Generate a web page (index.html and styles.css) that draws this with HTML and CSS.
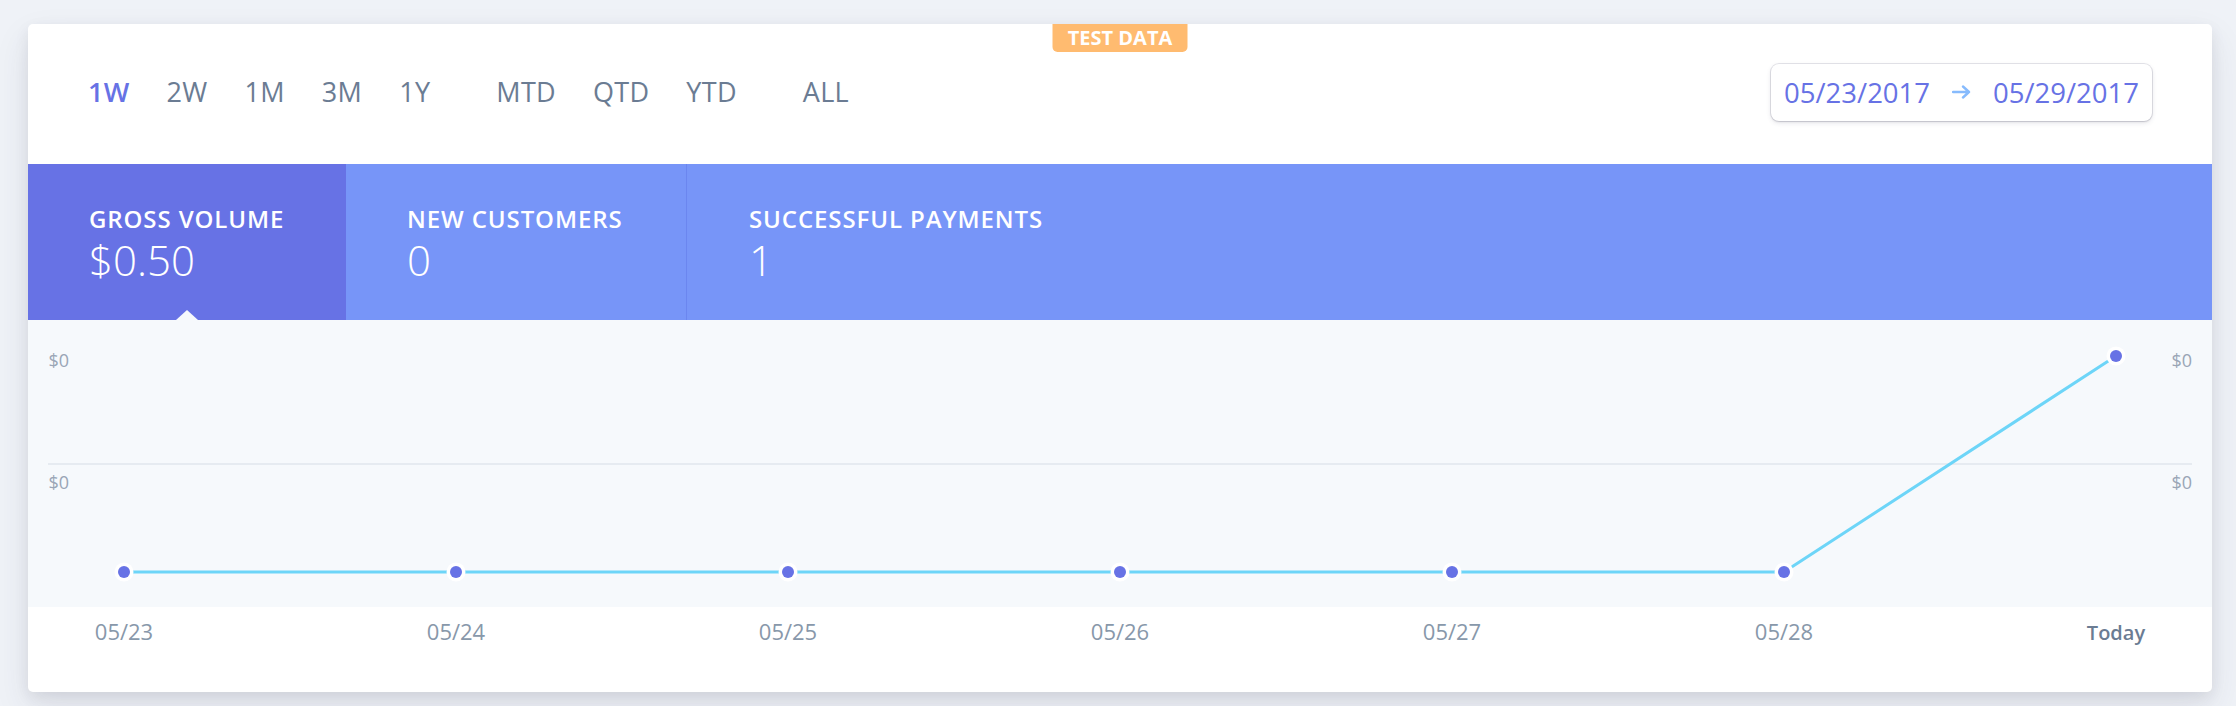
FILE: index.html
```html
<!DOCTYPE html>
<html lang="en">
<head>
<meta charset="utf-8">
<title>Dashboard</title>
<link rel="stylesheet" href="styles.css">
</head>
<body>
<div class="page">
  <div class="card">
    <div class="badge">TEST DATA</div>
    <div class="header">
      <nav class="periods">
        <div class="group">
          <span class="period active">1W</span>
          <span class="period">2W</span>
          <span class="period">1M</span>
          <span class="period">3M</span>
          <span class="period">1Y</span>
        </div>
        <div class="group">
          <span class="period">MTD</span>
          <span class="period">QTD</span>
          <span class="period">YTD</span>
        </div>
        <div class="group">
          <span class="period">ALL</span>
        </div>
      </nav>
      <div class="range">
        <span class="date">05/23/2017</span>
        <svg class="arrow" width="19" height="14" viewBox="0 0 19 14"><path d="M1 7H17M11 1.5L17 7L11 12.5" fill="none" stroke="#87bbfd" stroke-width="2.4" stroke-linecap="round" stroke-linejoin="round"/></svg>
        <span class="date">05/29/2017</span>
      </div>
    </div>
    <div class="stats">
      <div class="stat stat-active">
        <div class="stat-label">GROSS VOLUME</div>
        <div class="stat-value">$0.50</div>
        <span class="caret"></span>
      </div>
      <div class="stat stat-second">
        <div class="stat-label">NEW CUSTOMERS</div>
        <div class="stat-value">0</div>
      </div>
      <div class="stat stat-third">
        <div class="stat-label">SUCCESSFUL PAYMENTS</div>
        <div class="stat-value">1</div>
      </div>
    </div>
    <svg class="chart" width="2184" height="372" viewBox="0 0 2184 372">
      <rect x="0" y="0" width="2184" height="287" fill="#f6f9fc"/>
      <line x1="20" y1="144" x2="2164" y2="144" stroke="#e6ebf1" stroke-width="2"/>
      <g class="ylabel">
        <text x="20.5" y="47">$0</text>
        <text x="20.5" y="169">$0</text>
        <text x="2164" y="47" text-anchor="end">$0</text>
        <text x="2164" y="169" text-anchor="end">$0</text>
      </g>
      <polyline points="96,252 428,252 760,252 1092,252 1424,252 1756,252 2088,36" fill="none" stroke="#6dd5f8" stroke-width="3" stroke-linejoin="round"/>
      <g class="dots">
        <circle cx="96" cy="252" r="9.5" fill="#ffffff"/><circle cx="96" cy="252" r="6" fill="#6772e5"/>
        <circle cx="428" cy="252" r="9.5" fill="#ffffff"/><circle cx="428" cy="252" r="6" fill="#6772e5"/>
        <circle cx="760" cy="252" r="9.5" fill="#ffffff"/><circle cx="760" cy="252" r="6" fill="#6772e5"/>
        <circle cx="1092" cy="252" r="9.5" fill="#ffffff"/><circle cx="1092" cy="252" r="6" fill="#6772e5"/>
        <circle cx="1424" cy="252" r="9.5" fill="#ffffff"/><circle cx="1424" cy="252" r="6" fill="#6772e5"/>
        <circle cx="1756" cy="252" r="9.5" fill="#ffffff"/><circle cx="1756" cy="252" r="6" fill="#6772e5"/>
        <circle cx="2088" cy="36" r="9.5" fill="#ffffff"/><circle cx="2088" cy="36" r="6" fill="#6772e5"/>
      </g>
      <g class="xlabel">
        <text x="96" y="320">05/23</text>
        <text x="428" y="320">05/24</text>
        <text x="760" y="320">05/25</text>
        <text x="1092" y="320">05/26</text>
        <text x="1424" y="320">05/27</text>
        <text x="1756" y="320">05/28</text>
        <text class="today" x="2088" y="320">Today</text>
      </g>
    </svg>
  </div>
</div>
</body>
</html>
```
FILE: styles.css
```css
* { box-sizing: border-box; }
html, body {
  margin: 0;
  padding: 0;
  background: #eff2f7;
  font-family: "Open Sans", "Noto Sans", sans-serif;
}
.page {
  padding: 24px 24px 14px 28px;
}
.card {
  position: relative;
  width: 2184px;
  height: 668px;
  background: #ffffff;
  border-radius: 5px;
  overflow: hidden;
  box-shadow: 0 15px 35px rgba(50, 50, 93, 0.1), 0 5px 15px rgba(0, 0, 0, 0.07);
}
.badge {
  position: absolute;
  top: 0;
  left: 50%;
  transform: translateX(-50%);
  width: 135px;
  height: 28px;
  background: #ffbb70;
  color: #ffffff;
  border-radius: 0 0 5px 5px;
  font-size: 20px;
  font-weight: 700;
  line-height: 28px;
  text-align: center;
}
.header {
  height: 140px;
  display: flex;
  align-items: center;
  justify-content: space-between;
  padding: 0 60px 4px 60px;
}
.periods {
  display: flex;
  gap: 66px;
}
.group {
  display: flex;
  gap: 37px;
}
.period {
  font-size: 27px;
  line-height: 1.2;
  letter-spacing: 0.3px;
  color: #6b7c93;
}
.period.active {
  color: #6772e5;
  font-weight: 600;
}
.range {
  display: flex;
  align-items: center;
  gap: 22px;
  height: 57px;
  padding: 0 13px;
  border-radius: 8px;
  background: #ffffff;
  box-shadow: 0 0 0 1px rgba(50, 50, 93, 0.12), 0 2px 5px rgba(50, 50, 93, 0.12), 0 1px 2px rgba(0, 0, 0, 0.1);
}
.date {
  font-size: 27.5px;
  line-height: 1.2;
  color: #6772e5;
}
.arrow {
  display: block;
}
.stats {
  display: flex;
  height: 156px;
  background: #7795f8;
}
.stat {
  position: relative;
  padding: 41px 0 0 61px;
  color: #ffffff;
}
.stat-active {
  width: 318px;
  background: #6772e5;
}
.stat-second {
  width: 341px;
  border-right: 1px solid #6b86ef;
}
.stat-third {
  flex: 1;
  padding-left: 62px;
}
.stat-label {
  font-size: 24px;
  line-height: 1.2;
  font-weight: 600;
  letter-spacing: 0.9px;
}
.stat-value {
  margin-top: 1px;
  font-size: 42px;
  line-height: 1.2;
  font-weight: 300;
}
.caret {
  position: absolute;
  left: 50%;
  bottom: 0;
  margin-left: -11px;
  width: 0;
  height: 0;
  border-left: 11px solid transparent;
  border-right: 11px solid transparent;
  border-bottom: 10px solid #f6f9fc;
}
.chart {
  display: block;
}
.ylabel text {
  font-family: "Open Sans", "Noto Sans", sans-serif;
  font-size: 18px;
  fill: #9aa6b6;
}
.xlabel text {
  font-family: "Open Sans", "Noto Sans", sans-serif;
  font-size: 22px;
  fill: #8898aa;
  text-anchor: middle;
}
.xlabel text.today {
  fill: #6b7c93;
  font-size: 20px;
  font-weight: 600;
}
```
